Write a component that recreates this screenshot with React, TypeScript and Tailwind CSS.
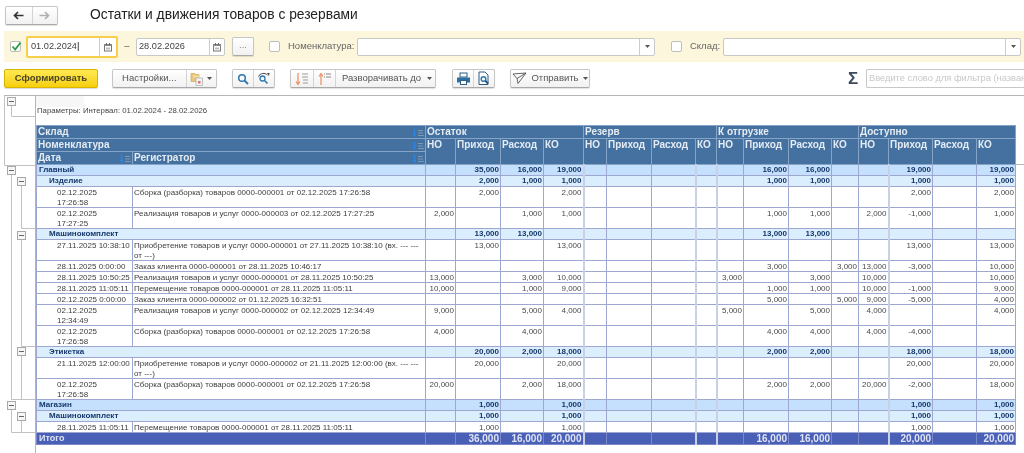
import React from "react";

const btn = "flex items-center justify-center h-[19px] border border-[#c6c6c6] border-b-[#a8a8a8] rounded-[2px] bg-linear-to-b from-white to-[#f1f1f1] shadow-[0_1px_1px_rgba(0,0,0,0.12)] text-[#555] text-[9.5px]";
const seg = "flex items-center justify-center h-full border-l border-[#d4d4d4] first:border-l-0";

const colWidths = [96, 293, 30, 45, 43, 40, 23, 45, 44, 21, 27, 45, 43, 27, 30, 44, 44, 39];
const thick = new Set([4, 7, 8, 13]);

type Kind = "g1" | "g2" | "d";
function r(kind: Kind, date: string, label: string, a: string[], b: string[], c: string[], h = false) {
  return { kind, date, label, vals: [...a, "", "", "", "", ...b, ...c], h };
}
const _ = "";
const data = [
  r("g1", "", "Главный", [_, "35,000", "16,000", "19,000"], [_, "16,000", "16,000", _], [_, "19,000", _, "19,000"]),
  r("g2", "", "Изделие", [_, "2,000", "1,000", "1,000"], [_, "1,000", "1,000", _], [_, "1,000", _, "1,000"]),
  r("d", "02.12.2025\n17:26:58", "Сборка (разборка) товаров 0000-000001 от 02.12.2025 17:26:58", [_, "2,000", _, "2,000"], [_, _, _, _], [_, "2,000", _, "2,000"], true),
  r("d", "02.12.2025\n17:27:25", "Реализация товаров и услуг 0000-000003 от 02.12.2025 17:27:25", ["2,000", _, "1,000", "1,000"], [_, "1,000", "1,000", _], ["2,000", "-1,000", _, "1,000"], true),
  r("g2", "", "Машинокомплект", [_, "13,000", "13,000", _], [_, "13,000", "13,000", _], [_, _, _, _]),
  r("d", "27.11.2025 10:38:10", "Приобретение товаров и услуг 0000-000001 от 27.11.2025 10:38:10 (вх. --- ---\nот ---)", [_, "13,000", _, "13,000"], [_, _, _, _], [_, "13,000", _, "13,000"], true),
  r("d", "28.11.2025 0:00:00", "Заказ клиента 0000-000001 от 28.11.2025 10:46:17", [_, _, _, _], [_, "3,000", _, "3,000"], ["13,000", "-3,000", _, "10,000"]),
  r("d", "28.11.2025 10:50:25", "Реализация товаров и услуг 0000-000001 от 28.11.2025 10:50:25", ["13,000", _, "3,000", "10,000"], ["3,000", _, "3,000", _], ["10,000", _, _, "10,000"]),
  r("d", "28.11.2025 11:05:11", "Перемещение товаров 0000-000001 от 28.11.2025 11:05:11", ["10,000", _, "1,000", "9,000"], [_, "1,000", "1,000", _], ["10,000", "-1,000", _, "9,000"]),
  r("d", "02.12.2025 0:00:00", "Заказ клиента 0000-000002 от 01.12.2025 16:32:51", [_, _, _, _], [_, "5,000", _, "5,000"], ["9,000", "-5,000", _, "4,000"]),
  r("d", "02.12.2025\n12:34:49", "Реализация товаров и услуг 0000-000002 от 02.12.2025 12:34:49", ["9,000", _, "5,000", "4,000"], ["5,000", _, "5,000", _], ["4,000", _, _, "4,000"], true),
  r("d", "02.12.2025\n17:26:58", "Сборка (разборка) товаров 0000-000001 от 02.12.2025 17:26:58", ["4,000", _, "4,000", _], [_, "4,000", "4,000", _], ["4,000", "-4,000", _, _], true),
  r("g2", "", "Этикетка", [_, "20,000", "2,000", "18,000"], [_, "2,000", "2,000", _], [_, "18,000", _, "18,000"]),
  r("d", "21.11.2025 12:00:00", "Приобретение товаров и услуг 0000-000002 от 21.11.2025 12:00:00 (вх. --- ---\nот ---)", [_, "20,000", _, "20,000"], [_, _, _, _], [_, "20,000", _, "20,000"], true),
  r("d", "02.12.2025\n17:26:58", "Сборка (разборка) товаров 0000-000001 от 02.12.2025 17:26:58", ["20,000", _, "2,000", "18,000"], [_, "2,000", "2,000", _], ["20,000", "-2,000", _, "18,000"], true),
  r("g1", "", "Магазин", [_, "1,000", _, "1,000"], [_, _, _, _], [_, "1,000", _, "1,000"]),
  r("g2", "", "Машинокомплект", [_, "1,000", _, "1,000"], [_, _, _, _], [_, "1,000", _, "1,000"]),
  r("d", "28.11.2025 11:05:11", "Перемещение товаров 0000-000001 от 28.11.2025 11:05:11", [_, "1,000", _, "1,000"], [_, _, _, _], [_, "1,000", _, "1,000"]),
];
const total = [_, "36,000", "16,000", "20,000", _, _, _, _, _, "16,000", "16,000", _, _, "20,000", _, "20,000"];

function Cal() {
  return (
    <svg width="10" height="10" viewBox="0 0 10 10">
      <rect x="1.500" y="2.500" width="7" height="6.500" fill="none" stroke="#777" strokeWidth="1" />
      <rect x="1" y="2" width="8" height="2" fill="#888" />
      <rect x="3" y="1" width="1" height="2" fill="#666" />
      <rect x="6" y="1" width="1" height="2" fill="#666" />
      <rect x="3" y="5.500" width="4" height="2" fill="#bbb" />
    </svg>
  );
}
function Caret() {
  return <svg width="5" height="3" viewBox="0 0 5 3"><path d="M0 0h5L2.500 3z" fill="#555" /></svg>;
}
function Check({ on }: { on?: boolean }) {
  return (
    <div className="w-[11px] h-[11px] border border-[#bdbdbd] rounded-[2px] bg-white shrink-0 relative">
      {on && (
        <svg className="absolute left-0 top-[-1px]" width="11" height="11" viewBox="0 0 11 11">
          <path d="M1.500 5.500 L4.200 8.500 L9.500 1.500" fill="none" stroke="#2f9e3f" strokeWidth="1.800" />
        </svg>
      )}
    </div>
  );
}
function SortIcon() {
  return (
    <svg width="12" height="8" viewBox="0 0 12 8">
      <path d="M2.500 0v6" stroke="#2a86e0" strokeWidth="1.700" />
      <path d="M0.500 5h4L2.500 8z" fill="#2a86e0" />
      <path d="M6 1.500h5M6 4h5M6 6.500h6" stroke="#8098ae" strokeWidth="1" />
    </svg>
  );
}
function SortDown() {
  return (
    <svg width="14" height="14" viewBox="0 0 14 14">
      <path d="M3 1v11" stroke="#ef8a5a" strokeWidth="1.200" />
      <path d="M1 9.500l2 3 2-3" fill="none" stroke="#ef8a5a" strokeWidth="1.200" />
      <path d="M7 2h6M7 5h6M8 8h5M8 11h5" stroke="#9a9a9a" strokeWidth="1.200" />
    </svg>
  );
}
function SortUp() {
  return (
    <svg width="14" height="14" viewBox="0 0 14 14">
      <path d="M3 2v11" stroke="#ef8a5a" strokeWidth="1.200" />
      <path d="M1 4.500l2-3 2 3" fill="none" stroke="#ef8a5a" strokeWidth="1.200" />
      <path d="M6 2h1M6 5h1M8 2h5M8 5h5" stroke="#888" strokeWidth="1.100" />
    </svg>
  );
}
function Folder() {
  return (
    <svg width="14" height="14" viewBox="0 0 14 14">
      <path d="M1 1.500h4l1 1h3v7H1z" fill="#e7c67e" stroke="#d0a658" strokeWidth="0.700" />
      <path d="M3 3.500h6v2H3z" fill="#f3dca6" />
      <rect x="6" y="6" width="6.500" height="7.500" fill="#f4f4f4" stroke="#aaa" strokeWidth="0.700" />
      <rect x="8" y="9" width="2.500" height="2.500" fill="#d9736f" />
    </svg>
  );
}
function Mag() {
  return (
    <svg width="12" height="12" viewBox="0 0 12 12">
      <circle cx="5" cy="5" r="3.300" fill="none" stroke="#2f78b0" strokeWidth="1.500" />
      <path d="M7.500 7.500l3.500 3.500" stroke="#2f78b0" strokeWidth="1.800" />
    </svg>
  );
}
function MagRepeat() {
  return (
    <svg width="14" height="13" viewBox="0 0 14 13">
      <circle cx="5.500" cy="6.500" r="2.500" fill="none" stroke="#2f78b0" strokeWidth="1.300" />
      <path d="M7.500 8.500l3 3" stroke="#2f78b0" strokeWidth="1.600" />
      <path d="M1.500 4.500C3 1 8 0.500 10.500 3" fill="none" stroke="#444" strokeWidth="1" />
      <path d="M10 1l2.500 0-.5 3z" fill="#444" />
    </svg>
  );
}
function Printer() {
  return (
    <svg width="15" height="14" viewBox="0 0 15 14">
      <rect x="4" y="1" width="7" height="4" fill="#fff" stroke="#2d5f88" strokeWidth="1" />
      <path d="M1 5.500h13v5h-3v-2H4v2H1z" fill="#2d6f9f" />
      <rect x="4.500" y="8.500" width="6" height="4" fill="#fff" stroke="#2d5f88" strokeWidth="1" />
    </svg>
  );
}
function Preview() {
  return (
    <svg width="14" height="15" viewBox="0 0 14 15">
      <path d="M2 1h6l3 3v9.500H2z" fill="#fff" stroke="#33587a" strokeWidth="1" />
      <circle cx="6.500" cy="8" r="2.300" fill="none" stroke="#2f78b0" strokeWidth="1.500" />
      <path d="M8.200 9.700l2.800 3" stroke="#1f4f7a" strokeWidth="1.800" />
    </svg>
  );
}
function Send() {
  return (
    <svg width="15" height="13" viewBox="0 0 15 13">
      <path d="M1 2 L14 1 L6 11.500 L5 6.500 Z M5 6.500 L14 1" fill="none" stroke="#555" strokeWidth="0.900" />
    </svg>
  );
}
function Arrow({ dir, color }: { dir: "l" | "r"; color: string }) {
  return (
    <svg width="11" height="9" viewBox="0 0 11 9">
      {dir === "l" ? (
        <path d="M10.500 4.500H2M5 1L1.500 4.500 5 8" fill="none" stroke={color} strokeWidth="1.700" />
      ) : (
        <path d="M0.500 4.500H9M6 1l3.500 3.500L6 8" fill="none" stroke={color} strokeWidth="1.700" />
      )}
    </svg>
  );
}

function TreeBox({ x, y }: { x: number; y: number }) {
  return (
    <g>
      <rect x={x + 0.5} y={y + 0.5} width="8" height="8" fill="#f6f6f6" stroke="#a8a8a8" />
      <path d={`M${x + 2} ${y + 4.5}h5`} stroke="#666" strokeWidth="1" />
    </g>
  );
}

function Tree() {
  const lines = "M11.500 106V116.500H35 M11.500 175V399.500H35 M21.500 186V228.500H35 M21.500 240V346.500H35 M21.500 356V399.500 M11.500 409V432.500H35 M21.500 420V432.500";
  return (
    <svg className="absolute left-0 top-0 pointer-events-none" width="36" height="453" viewBox="0 0 36 453">
      <path d={lines} fill="none" stroke="#c2c2c2" strokeWidth="1" />
      <path d="M4.500 96V165.500H35" fill="none" stroke="#c2c2c2" strokeWidth="1" />
      <TreeBox x={7} y={97} />
      <TreeBox x={7} y={166} />
      <TreeBox x={17} y={177} />
      <TreeBox x={17} y={231} />
      <TreeBox x={17} y={347} />
      <TreeBox x={7} y={401} />
      <TreeBox x={17} y={412} />
    </svg>
  );
}

const headCell = "relative border border-[#86a3c8] bg-[#44719f] text-[#e4ebf3] font-bold text-[10px] leading-[12px] text-left align-top px-[1px] whitespace-nowrap overflow-hidden";
const sep = (i: number) => (thick.has(i) ? "border-l-[2px] border-l-[#c9cfe4]" : "");

export default function App() {
  return (
    <div className="relative w-[1024px] h-[453px] overflow-hidden bg-white blur-[0.35px]" style={{ fontFamily: "'Liberation Sans', Arial, sans-serif" }}>
      {/* title bar */}
      <div className="flex items-center h-[31px] pl-[5px]">
        <div className={`${btn} w-[53px] h-[18px]`}>
          <div className={`${seg} w-[27px]`}><Arrow dir="l" color="#333" /></div>
          <div className={`${seg} w-[26px]`}><Arrow dir="r" color="#b0b0b0" /></div>
        </div>
        <div className="ml-[32px] text-[13.8px] text-[#222] mt-[-1px] whitespace-nowrap">Остатки и движения товаров с резервами</div>
      </div>

      {/* filter band */}
      <div className="flex items-center h-[31px] ml-[4px] bg-[#fcf6dc] text-[#555] text-[9.5px]">
        <div className="ml-[6px]"><Check on /></div>
        <div className="ml-[5px] w-[92px] h-[22px] border-2 border-[#f6cf4b] bg-white rounded-[2px] flex items-center">
          <div className="flex-1 pl-[3px] text-[#444] text-[9.2px]">01.02.2024<span className="text-black">|</span></div>
          <div className="w-[17px] h-full border-l border-[#ccc] flex items-center justify-center"><Cal /></div>
        </div>
        <div className="w-[18px] text-center">–</div>
        <div className="w-[89px] h-[18px] border border-[#c8c8c8] bg-white rounded-[2px] flex items-center">
          <div className="flex-1 pl-[2px] text-[#444] text-[9.2px]">28.02.2026</div>
          <div className="w-[15px] h-full border-l border-[#ccc] flex items-center justify-center"><Cal /></div>
        </div>
        <div className={`${btn} ml-[7px] w-[22px] pb-[2px] text-[#888]`}>...</div>
        <div className="ml-[15px]"><Check /></div>
        <div className="ml-[8px] w-[69px] whitespace-nowrap text-[#666]">Номенклатура:</div>
        <div className="w-[298px] h-[18px] border border-[#c8c8c8] bg-white rounded-[2px] flex items-center justify-end">
          <div className="w-[15px] h-full border-l border-[#ccc] flex items-center justify-center"><Caret /></div>
        </div>
        <div className="ml-[16px]"><Check /></div>
        <div className="ml-[8px] w-[33px] whitespace-nowrap text-[#666]">Склад:</div>
        <div className="w-[298px] h-[18px] border border-[#c8c8c8] bg-white rounded-[2px] flex items-center justify-end">
          <div className="w-[15px] h-full border-l border-[#ccc] flex items-center justify-center"><Caret /></div>
        </div>
      </div>

      {/* command bar */}
      <div className="flex items-center h-[33px] pl-[4px] text-[9.5px]">
        <div className="flex items-center justify-center w-[94px] h-[19px] border border-[#d9b400] rounded-[2px] bg-linear-to-b from-[#ffe94f] to-[#f7cf00] shadow-[0_1px_1px_rgba(0,0,0,0.15)] text-[#4a4620] font-bold text-[9.5px]">Сформировать</div>
        <div className={`${btn} ml-[14px] w-[105px]`}>
          <div className={`${seg} w-[74px] whitespace-nowrap`}>Настройки...</div>
          <div className={`${seg} w-[31px] gap-[3px]`}><Folder /><Caret /></div>
        </div>
        <div className={`${btn} ml-[15px] w-[43px]`}>
          <div className={`${seg} w-[21px]`}><Mag /></div>
          <div className={`${seg} w-[22px]`}><MagRepeat /></div>
        </div>
        <div className={`${btn} ml-[15px] w-[146px]`}>
          <div className={`${seg} w-[22px]`}><SortDown /></div>
          <div className={`${seg} w-[22px]`}><SortUp /></div>
          <div className={`${seg} flex-1 gap-[6px] pl-[3px] whitespace-nowrap`}>Разворачивать до<Caret /></div>
        </div>
        <div className={`${btn} ml-[16px] w-[43px]`}>
          <div className={`${seg} w-[21px]`}><Printer /></div>
          <div className={`${seg} w-[22px]`}><Preview /></div>
        </div>
        <div className={`${btn} ml-[15px] w-[80px] gap-[4px] whitespace-nowrap`}><Send />Отправить<Caret /></div>
        <div className="ml-[258px] w-[18px] text-[#3a4a5a] text-[17px] leading-none font-bold">Σ</div>
        <div className="w-[158px] h-[19px] shrink-0 border border-[#c8c8c8] border-r-0 rounded-l-[2px] bg-white pl-[2px] text-[#c8c8c8] text-[9.3px] leading-[17px] whitespace-nowrap">Введите слово для фильтра (назван</div>
      </div>

      {/* report */}
      <div className="ml-[4px] border-t border-[#b5b5b5] h-[358px]">
        <div className="ml-[31px] border-l border-[#b5b5b5] h-full">
          <div className="h-[29px]">
            <div className="w-[48px] h-[11px] bg-[#f7f7f7]" />
            <div className="pl-[1px] mt-[-1px] text-[7.8px] leading-[10px] text-[#444] whitespace-nowrap">Параметры: Интервал: 01.02.2024 - 28.02.2026</div>
          </div>
          <table className="table-fixed border-collapse w-[980px]">
            <colgroup>
              {colWidths.map((w, i) => <col key={i} style={{ width: w }} />)}
            </colgroup>
            <thead>
              <tr className="h-[13px]">
                <th colSpan={2} className={headCell}>Склад<span className="absolute right-[1px] top-[3px]"><SortIcon /></span></th>
                <th colSpan={4} className={headCell}>Остаток</th>
                <th colSpan={4} className={headCell}>Резерв</th>
                <th colSpan={4} className={headCell}>К отгрузке</th>
                <th colSpan={4} className={headCell}>Доступно</th>
              </tr>
              <tr className="h-[13px]">
                <th colSpan={2} className={headCell}>Номенклатура<span className="absolute right-[1px] top-[3px]"><SortIcon /></span></th>
                {["НО", "Приход", "Расход", "КО", "НО", "Приход", "Расход", "КО", "НО", "Приход", "Расход", "КО", "НО", "Приход", "Расход", "КО"].map((t, i) => (
                  <th key={i} rowSpan={2} className={headCell}>{t}</th>
                ))}
              </tr>
              <tr className="h-[13px]">
                <th className={headCell}>Дата<span className="absolute right-[1px] top-[3px]"><SortIcon /></span></th>
                <th className={headCell}>Регистратор<span className="absolute right-[1px] top-[3px]"><SortIcon /></span></th>
              </tr>
            </thead>
            <tbody className="text-[8px] leading-[10px]">
              {data.map((row, ri) => {
                const bg = row.kind === "g1" ? "bg-[#c5e0fc]" : row.kind === "g2" ? "bg-[#daeefe]" : "bg-white";
                const group = row.kind !== "d";
                return (
                  <tr key={ri} className={row.h ? "h-[21px]" : "h-[11px]"}>
                    {group ? (
                      <td colSpan={2} className={`${bg} border border-[#9ea6d2] align-top p-0 font-bold text-[#17386b] overflow-hidden whitespace-nowrap ${row.kind === "g1" ? "pl-[2px]" : "pl-[12px]"}`}>{row.label}</td>
                    ) : (
                      <>
                        <td className="border border-[#9ea6d2] align-top p-0 pl-[20px] text-[#3d3d3d] whitespace-pre-line overflow-hidden"><div className="pt-[1px] mb-[-1px]">{row.date}</div></td>
                        <td className="border border-[#9ea6d2] align-top p-0 pl-[1px] text-[#3d3d3d] whitespace-pre-line overflow-hidden"><div className="pt-[1px] mb-[-1px]">{row.label}</div></td>
                      </>
                    )}
                    {row.vals.map((v, i) => (
                      <td key={i} className={`${bg} border border-[#9ea6d2] ${sep(i)} align-top p-0 pr-[1px] text-right whitespace-nowrap overflow-hidden ${group ? "font-bold text-[#17386b]" : "text-[#4a4a4a]"}`}>
                        <div className={group ? "" : "pt-[1px] mb-[-1px]"}>{v || "\u00a0"}</div>
                      </td>
                    ))}
                  </tr>
                );
              })}
              <tr className="h-[12px]">
                <td colSpan={2} className="border border-[#7a88c9] bg-[#4a60b6] align-top p-0 pl-[2px] font-bold text-[9px] leading-[11px] text-[#dfe4f5]">Итого</td>
                {total.map((v, i) => (
                  <td key={i} className={`border border-[#7a88c9] ${sep(i)} bg-[#4a60b6] align-top p-0 pr-[1px] text-right font-bold text-[10px] leading-[11px] text-[#dfe4f5] whitespace-nowrap overflow-hidden`}>{v}</td>
                ))}
              </tr>
            </tbody>
          </table>
        </div>
      </div>
      <div className="absolute left-[1015px] top-[164px] w-[9px] h-px bg-[#b5b5b5]" />
      <Tree />
    </div>
  );
}
